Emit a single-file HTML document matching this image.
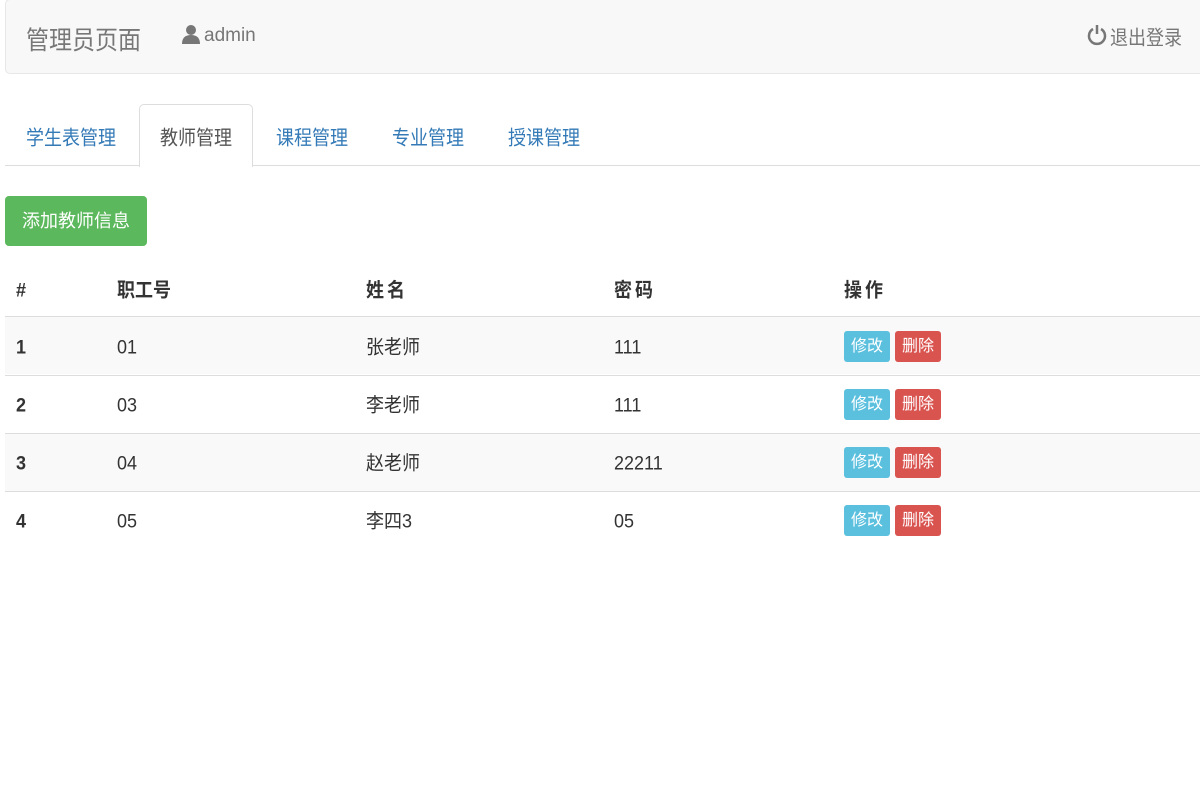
<!DOCTYPE html>
<html><head><meta charset="utf-8"><style>
body{margin:0;width:1200px;height:800px;background:#fff;font-family:"Liberation Sans","Noto Sans CJK SC",sans-serif;color:#333;position:relative;overflow:hidden}
.a{position:absolute;white-space:nowrap}
.nav{left:5px;top:-1px;width:1200px;height:73px;background:#f8f8f8;border:1px solid #e7e7e7;border-radius:5px}
.tab{font-size:18px;color:#337ab7;top:124px;transform:scaleY(1.1)}
.row{left:5px;width:1195px;height:57px;border-top:1px solid #ddd}
.c{font-size:18px;line-height:20px;transform:scaleY(1.08)}
.b{font-size:16px;color:#fff;height:31px;line-height:31px;width:46px;text-align:center;border-radius:3px}
</style></head><body>
<div class="a nav"></div>
<div class="a" style="left:26px;top:21px;font-size:23px;color:#777;transform:scaleY(1.12)">管理员页面</div>
<svg class="a" style="left:181px;top:24px" width="20" height="20" viewBox="0 0 20 20"><circle cx="10" cy="6" r="5" fill="#777"/><path d="M1 20 Q1 11 10 11 Q19 11 19 20Z" fill="#777"/></svg>
<div class="a" style="left:204px;top:25px;font-size:19px;color:#777">admin</div>
<svg class="a" style="left:1087px;top:24px" width="20" height="22" viewBox="0 0 20 22"><path d="M6 5 A8 8 0 1 0 14 5" fill="none" stroke="#777" stroke-width="2.5"/><line x1="10" y1="1" x2="10" y2="10" stroke="#777" stroke-width="2.5"/></svg>
<div class="a" style="left:1110px;top:24px;font-size:18px;color:#777;transform:scaleY(1.1)">退出登录</div>
<div class="a" style="left:5px;top:165px;width:1195px;height:1px;background:#ddd"></div>
<div class="a" style="left:139px;top:104px;width:112px;height:62px;background:#fff;border:1px solid #ddd;border-bottom:none;border-radius:5px 5px 0 0"></div>
<div class="a tab" style="left:26px">学生表管理</div>
<div class="a tab" style="left:160px;color:#555">教师管理</div>
<div class="a tab" style="left:276px">课程管理</div>
<div class="a tab" style="left:392px">专业管理</div>
<div class="a tab" style="left:508px">授课管理</div>
<div class="a" style="left:5px;top:196px;width:142px;height:50px;background:#5cb85c;border-radius:4px;color:#fff;font-size:18px;line-height:50px;text-align:center">添加教师信息</div>
<div class="a c" style="top:280px;left:16px;font-weight:bold">#</div>
<div class="a c" style="top:280px;left:117px;font-weight:bold">职工号</div>
<div class="a c" style="top:280px;left:366px;font-weight:bold;letter-spacing:3px">姓名</div>
<div class="a c" style="top:280px;left:614px;font-weight:bold;letter-spacing:3px">密码</div>
<div class="a c" style="top:280px;left:844px;font-weight:bold;letter-spacing:3px">操作</div>
<div class="a" style="left:5px;top:316px;width:1195px;height:2px;background:#ddd"></div>
<div class="a row" style="top:317px;background:#f9f9f9;border-top:none"></div>
<div class="a row" style="top:375px"></div>
<div class="a row" style="top:433px;background:#f9f9f9"></div>
<div class="a row" style="top:491px"></div>

<div class="a c" style="top:337px;left:16px;font-weight:bold">1</div><div class="a c" style="top:337px;left:117px">01</div><div class="a c" style="top:337px;left:366px">张老师</div><div class="a c" style="top:337px;left:614px">111</div>
<div class="a c" style="top:395px;left:16px;font-weight:bold">2</div><div class="a c" style="top:395px;left:117px">03</div><div class="a c" style="top:395px;left:366px">李老师</div><div class="a c" style="top:395px;left:614px">111</div>
<div class="a c" style="top:453px;left:16px;font-weight:bold">3</div><div class="a c" style="top:453px;left:117px">04</div><div class="a c" style="top:453px;left:366px">赵老师</div><div class="a c" style="top:453px;left:614px">22211</div>
<div class="a c" style="top:511px;left:16px;font-weight:bold">4</div><div class="a c" style="top:511px;left:117px">05</div><div class="a c" style="top:511px;left:366px">李四3</div><div class="a c" style="top:511px;left:614px">05</div>

<div class="a b" style="left:844px;top:331px;background:#5bc0de">修改</div><div class="a b" style="left:895px;top:331px;background:#d9534f">删除</div>
<div class="a b" style="left:844px;top:389px;background:#5bc0de">修改</div><div class="a b" style="left:895px;top:389px;background:#d9534f">删除</div>
<div class="a b" style="left:844px;top:447px;background:#5bc0de">修改</div><div class="a b" style="left:895px;top:447px;background:#d9534f">删除</div>
<div class="a b" style="left:844px;top:505px;background:#5bc0de">修改</div><div class="a b" style="left:895px;top:505px;background:#d9534f">删除</div>
</body></html>
